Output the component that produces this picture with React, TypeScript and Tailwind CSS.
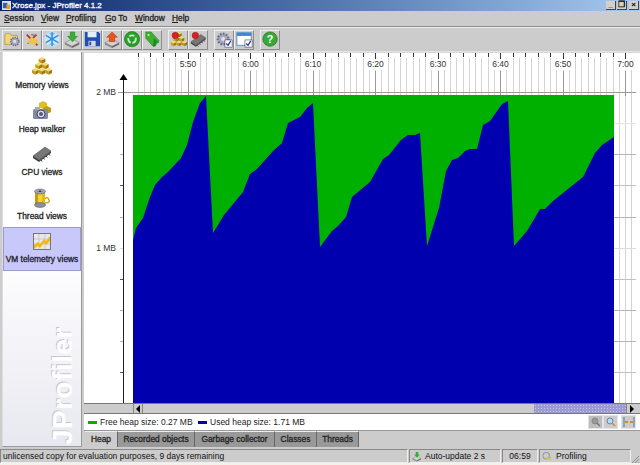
import React from "react";

const curve: [number, number][] = [
  [133, 240],[136, 228],[143, 218],[150, 197],[155, 185],[162, 177],[168, 172],[181, 158],[187, 145],[193, 122],[200, 103],[206, 96],
  [213, 233],[224, 215],[243, 192],[250, 174],[257, 169],[273, 151],[282, 143],[288, 123],[300, 117],[307, 108],[313, 103],
  [320, 247],[332, 231],[338, 226],[346, 217],[352, 197],[370, 182],[383, 159],[389, 155],[401, 140],[408, 135],[415, 135],[420, 133],
  [427, 246],[439, 208],[446, 171],[452, 160],[458, 158],[465, 151],[470, 149],[477, 149],[483, 125],[490, 121],[502, 104],[508, 101],
  [514, 246],[527, 231],[533, 221],[540, 209],[545, 209],[553, 201],[583, 177],[595, 153],[602, 145],[614, 137],
];
const usedPoints = [...curve.map((p) => p.join(",")), "614,403", "133,403"].join(" ");
const FONT = "font-['Liberation_Sans',Arial,sans-serif]";
const SVG_FONT = { fontFamily: "'Liberation Sans', Arial, sans-serif" };

const minor = Array.from({ length: 80 }, (_, i) => 138 + i * 6.25);
const labels = ["5:50", "6:00", "6:10", "6:20", "6:30", "6:40", "6:50", "7:00"];
const yTicks: [number, string][] = [
  [123, "#e4e4e4"], [154, "#b4b4b4"], [185, "#555555"], [217, "#b4b4b4"], [248, "#dcdcdc"],
  [279, "#555555"], [310, "#b4b4b4"], [341, "#b4b4b4"], [372, "#555555"],
];

function Chart() {
  return (
    <svg viewBox="84 52 556 351" className="block w-full h-[351px]" shapeRendering="crispEdges">
      <rect x="84" y="52" width="556" height="351" fill="#ffffff" />
      <line x1="84" x2="640" y1="52.5" y2="52.5" stroke="#d8d8d8" />
      {minor.map((x, i) => (
        <g key={x}>
          <line x1={x} x2={x} y1="58" y2="403" stroke="#d4d4d4" />
          {i % 2 === 0 && <line x1={x} x2={x} y1="53" y2={i % 10 === 8 ? 60 : 57} stroke="#333333" />}
        </g>
      ))}
      {labels.map((l, i) => {
        const x = 188 + i * 62.5;
        return (
          <g key={l}>
            <rect x={x - 9} y="59" width="18" height="11" fill="#ffffff" />
            <line x1={x} x2={x} y1="71" y2="96" stroke="#999999" />
            <text x={x} y="67" textAnchor="middle" fontSize="8.5" fill="#333" style={SVG_FONT} shapeRendering="auto">{l}</text>
          </g>
        );
      })}
      <line x1="118" x2="636" y1="92.5" y2="92.5" stroke="#9a9a9a" />
      {yTicks.map(([y, c]) => (
        <g key={y}>
          <line x1="133" x2="636" y1={y + 0.5} y2={y + 0.5} stroke={c === "#555555" ? "#c0c0c0" : c} />
          <line x1="120" x2="124" y1={y + 0.5} y2={y + 0.5} stroke={c} />
        </g>
      ))}
      <line x1="123.5" x2="123.5" y1="78" y2="403" stroke="#222222" />
      <polygon points="123.5,74 119.5,80 127.5,80" fill="#000000" shapeRendering="auto" />
      <rect x="133" y="95" width="481" height="308" fill="#00b000" />
      <polygon points={usedPoints} fill="#0000ae" shapeRendering="auto" />
      <text x="116" y="95" textAnchor="end" fontSize="8.5" fill="#333" style={SVG_FONT} shapeRendering="auto">2 MB</text>
      <text x="116" y="251" textAnchor="end" fontSize="8.5" fill="#333" style={SVG_FONT} shapeRendering="auto">1 MB</text>
    </svg>
  );
}

function CubeGroup() {
  const c = (x: number, y: number) => (
    <g key={`${x}-${y}`}>
      <polygon points={`${x},${y + 1.5} ${x + 3},${y} ${x + 6},${y + 1.5} ${x + 3},${y + 3}`} fill="#f4dc6a" />
      <polygon points={`${x},${y + 1.5} ${x + 3},${y + 3} ${x + 3},${y + 6} ${x},${y + 4.5}`} fill="#c99a18" />
      <polygon points={`${x + 6},${y + 1.5} ${x + 3},${y + 3} ${x + 3},${y + 6} ${x + 6},${y + 4.5}`} fill="#9a7510" />
    </g>
  );
  return <g>{[[6, 0], [3, 5], [9, 5], [0, 10], [6, 10], [12, 10]].map(([x, y]) => c(x, y))}</g>;
}

function Cubes({ size = 20 }: { size?: number }) {
  return (
    <svg width={size} height={size} viewBox="0 0 18 18">
      <CubeGroup />
    </svg>
  );
}

function ChipGroup() {
  return (
    <g>
      <polygon points="1,10 13,1 19,5 7,14" fill="#77777a" stroke="#444" strokeWidth="0.5" />
      <polygon points="1,10 7,14 7,16 1,12" fill="#3a3a3a" />
      <polygon points="7,14 19,5 19,7 7,16" fill="#4a4a4a" />
      {[0, 1, 2, 3].map((i) => (
        <line key={i} x1={9 + i * 2.6} y1={14 - i * 2} x2={10 + i * 2.6} y2={15.5 - i * 2} stroke="#333" />
      ))}
    </g>
  );
}

function Chip({ size = 20 }: { size?: number }) {
  return (
    <svg width={size} height={size * 0.8} viewBox="0 0 20 16">
      <ChipGroup />
    </svg>
  );
}

function Spool() {
  return (
    <svg width="18" height="20" viewBox="0 0 18 20">
      <path d="M9 15c5 0 8 0 7-3s-3-3-4-1" fill="none" stroke="#c69c10" strokeWidth="1.3" />
      <rect x="2" y="4" width="10" height="12" fill="#f5d430" />
      <rect x="2" y="4" width="3" height="12" fill="#c99c10" />
      <rect x="9" y="4" width="3" height="12" fill="#e4b818" />
      <ellipse cx="7" cy="3.5" rx="5.5" ry="2.5" fill="#9aa4b4" stroke="#555" strokeWidth="0.5" />
      <ellipse cx="7" cy="3.2" rx="1.6" ry="0.8" fill="#333" />
      <ellipse cx="7" cy="17" rx="5.5" ry="2.5" fill="#8a90a0" stroke="#555" strokeWidth="0.5" />
    </svg>
  );
}

function Telemetry() {
  return (
    <svg width="18" height="18" viewBox="0 0 18 18">
      <rect x="0.5" y="1.5" width="17" height="16" fill="#e8e8e8" stroke="#777" />
      <path d="M1 7h16M1 12h16M6 2v15M12 2v15" stroke="#bbb" strokeWidth="0.6" />
      <polygon points="1,13 5,10 7,12 11,7 13,9 17,4 17,9 13,13 11,11 7,16 5,14 1,17" fill="#f2b818" />
    </svg>
  );
}

function HeapWalker() {
  return (
    <svg width="20" height="20" viewBox="0 0 20 20">
      <polygon points="11,0 15,2 15,6 11,8 7,6 7,2" fill="#e2bc2a" />
      <polygon points="15,5 19,7 19,11 15,13 11,11 11,7" fill="#c79a14" />
      <rect x="1" y="8" width="15" height="10" rx="1.5" fill="#8589a8" />
      <rect x="3" y="6" width="5" height="3" fill="#a6a8bc" />
      <circle cx="9" cy="13" r="4" fill="#dcdce8" stroke="#44465c" />
      <circle cx="9" cy="13" r="2" fill="#55587a" />
    </svg>
  );
}

const Stop = () => <circle cx="6" cy="5" r="3.6" fill="#e02020" stroke="#901010" strokeWidth="0.6" />;
const Tray = () => (
  <g>
    <polygon points="1,13 9,9 17,13 9,17" fill="#d4d4d4" stroke="#777" strokeWidth="0.6" />
    <polygon points="1,13 9,17 9,19 1,15" fill="#888" />
    <polygon points="17,13 9,17 9,19 17,15" fill="#666" />
  </g>
);
const Check = ({ x = 10, y = 10 }: { x?: number; y?: number }) => (
  <g transform={`translate(${x} ${y})`}>
    <rect x="0" y="0" width="8" height="8" fill="#fff" stroke="#334" strokeWidth="0.6" />
    <path d="M1.5 4l2 2 3-5" fill="none" stroke="#1530a0" strokeWidth="1.3" />
  </g>
);
const Gear = () => (
  <g>
    <circle cx="8" cy="9" r="6" fill="#a8a8c4" stroke="#6a6a88" strokeWidth="2.4" strokeDasharray="2 1.4" />
    <circle cx="8" cy="9" r="2.2" fill="#e4e4ee" />
  </g>
);

const toolIcons: React.ReactNode[] = [
  <g key="1"><path d="M1 5l1-2h5l1 2h7v10H1z" fill="#f0d878" stroke="#a88a30" strokeWidth="0.7" /><g transform="translate(6 5) scale(.75)"><Gear /></g></g>,
  <g key="2"><path d="M3 4l12 12M14 4L4 14" stroke="#d02020" strokeWidth="1.8" /><path d="M3 13l5-6 8 3-3 5z" fill="#e8c840" /><path d="M8 4l5 1" stroke="#777" strokeWidth="1.6" /></g>,
  <g key="3"><circle cx="9" cy="9" r="8.5" fill="#cfe6fa" /><path d="M9 1v16M2 5l14 8M16 5L2 13" stroke="#2a8ee0" strokeWidth="1.6" /><path d="M6 2l3 3 3-3M6 16l3-3 3 3" stroke="#2a8ee0" fill="none" /></g>,
  <g key="4"><Tray /><polygon points="7,1 12,1 12,6 15,6 9.5,12 4,6 7,6" fill="#35b035" stroke="#1a7a1a" strokeWidth="0.5" /></g>,
  <g key="5"><path d="M1 1h15l2 2v14H1z" fill="#1f4fb0" /><rect x="4" y="1" width="10" height="6" fill="#e8eef8" /><rect x="5" y="11" width="8" height="6" fill="#d8d8e0" /><rect x="6" y="12" width="2" height="4" fill="#1f4fb0" /></g>,
  <g key="6"><Tray /><polygon points="9,1 15,7 12,7 12,12 6,12 6,7 3,7" fill="#e8541c" stroke="#a83008" strokeWidth="0.5" /></g>,
  <g key="7"><circle cx="9" cy="9" r="8.5" fill="#28a028" stroke="#156815" strokeWidth="0.6" /><circle cx="9" cy="9" r="4.2" fill="none" stroke="#d6f0d0" strokeWidth="2" strokeDasharray="6 2" /></g>,
  <g key="8"><polygon points="2,1 8,1 17,11 12,17 10,17 2,8" fill="#40b030" stroke="#1c7a1c" strokeWidth="0.6" /><circle cx="5" cy="4.5" r="1.2" fill="#d0f0c0" /><polygon points="11,8 17,13 13,13 13,17 10,17" fill="#1c8a2c" /></g>,
  <g key="9"><g transform="translate(1 1)"><CubeGroup /></g><Stop /></g>,
  <g key="10"><g transform="translate(0 3) scale(.92)"><ChipGroup /></g><Stop /></g>,
  <g key="11"><Gear /><Check /></g>,
  <g key="12"><rect x="1" y="2" width="16" height="14" fill="#ffffff" stroke="#5088c8" /><rect x="1" y="2" width="16" height="3.5" fill="#3a8ad8" /><Check /></g>,
  <g key="13"><circle cx="9" cy="9" r="8" fill="#38a838" stroke="#167016" strokeWidth="0.8" /><text x="9" y="13" textAnchor="middle" fontSize="12" fontWeight="700" fill="#fff" style={SVG_FONT}>?</text></g>,
];

function ToolButton({ icon }: { icon: React.ReactNode }) {
  return (
    <div className="w-5 h-[20px] flex items-center justify-center border border-t-[#efefef] border-l-[#efefef] border-r-[#8c8c8c] border-b-[#8c8c8c] bg-[#cccccc]">
      <svg width="17" height="17" viewBox="0 0 19 19">{icon}</svg>
    </div>
  );
}

const Sep = () => <div className="w-[6px]" />;
const HEAVY = "[-webkit-text-stroke:0.3px_#222222]";

function Menu({ first, rest, className }: { first: string; rest: string; className: string }) {
  return <span className={`${className} whitespace-nowrap`}><span className="underline">{first}</span>{rest}</span>;
}

function SideItem({ icon, label, selected }: { icon: React.ReactNode; label: string; selected?: boolean }) {
  return (
    <div className={`h-[43.75px] shrink-0 flex flex-col items-center justify-end pb-[5px] gap-[1px] ${selected ? "bg-[#c8c8fa] border border-[#9c9ccc]" : ""}`}>
      <div className="h-[24px] flex items-center justify-center">{icon}</div>
      <div className={`text-[8.4px] leading-[11px] text-[#222] whitespace-nowrap ${HEAVY}`}>{label}</div>
    </div>
  );
}

function Tab({ label, w, active }: { label: string; w: string; active?: boolean }) {
  return (
    <div className={`${w} h-[16px] flex items-center justify-center whitespace-nowrap text-[8.4px] text-[#222] border-r border-r-[#666] border-t border-t-[#eee] ${HEAVY} ${active ? "bg-[#cccccc]" : "bg-[#999999]"}`}>
      {label}
    </div>
  );
}

function Status({ w, children }: { w: string; children: React.ReactNode }) {
  return (
    <div className={`${w} h-[14px] flex items-center border-t border-l border-t-[#888] border-l-[#888] border-b border-r border-b-[#eee] border-r-[#eee] text-[8.5px] text-[#111] whitespace-nowrap`}>
      {children}
    </div>
  );
}

export default function App() {
  return (
    <div className={`${FONT} w-[640px] h-[465px] overflow-hidden bg-[#cccccc] flex flex-col`}>
      {/* title */}
      <div className="h-[11px] shrink-0 flex items-center bg-gradient-to-r from-[#0a246a] to-[#a6caf0] pl-[2px] pr-[1px]">
        <svg width="9" height="9" viewBox="0 0 10 10" className="mr-[1px]"><rect width="10" height="10" fill="#d8e4f0" /><rect x="1" y="2" width="5" height="6" fill="#3060c0" /><rect x="5" y="4" width="4" height="5" fill="#e8a020" /></svg>
        <span className="text-[8px] leading-[11px] text-white whitespace-nowrap [-webkit-text-stroke:0.3px_#ffffff]">Xrose.jpx - JProfiler 4.1.2</span>
        <div className="ml-auto flex gap-[1px]">
          {["_", "❐", "×"].map((s, i) => (
            <div key={s} className={`w-[10px] h-[9px] bg-[#d4d0c8] border-r border-b border-[#444] text-[8px] leading-[8px] text-black text-center font-bold ${i === 2 ? "ml-[1px]" : ""}`}>{s}</div>
          ))}
        </div>
      </div>
      {/* menu */}
      <div className={`h-[16px] shrink-0 relative flex items-center text-[8.4px] text-[#222] border-b border-b-[#8c8c8c] ${HEAVY}`}>
        <Menu first="S" rest="ession" className="ml-[4px] w-[37px]" />
        <Menu first="V" rest="iew" className="w-[25px]" />
        <Menu first="P" rest="rofiling" className="w-[39px]" />
        <Menu first="G" rest="o To" className="w-[30px]" />
        <Menu first="W" rest="indow" className="w-[37px]" />
        <Menu first="H" rest="elp" className="w-[24px]" />
      </div>
      {/* toolbar */}
      <div className="h-[25px] shrink-0 flex items-center pl-[2px] border-t border-t-[#eeeeee] border-b border-b-[#e4e4e4]">
        {toolIcons.slice(0, 8).map((ic, i) => <ToolButton key={i} icon={ic} />)}
        <Sep />
        {toolIcons.slice(8, 10).map((ic, i) => <ToolButton key={i} icon={ic} />)}
        <Sep />
        {toolIcons.slice(10, 12).map((ic, i) => <ToolButton key={i} icon={ic} />)}
        <Sep />
        <ToolButton icon={toolIcons[12]} />
      </div>
      {/* body */}
      <div className="flex flex-1 min-h-0">
        {/* sidebar */}
        <div className="w-[80px] ml-[2px] mr-[2px] h-[395px] shrink-0 flex flex-col bg-gradient-to-b from-[#ffffff] via-[#ffffff] to-[#e8e8f0] border-r border-r-[#999] border-b border-b-[#999] border-l border-l-[#ddd]">
          <SideItem icon={<Cubes />} label="Memory views" />
          <SideItem icon={<HeapWalker />} label="Heap walker" />
          <SideItem icon={<Chip />} label="CPU views" />
          <SideItem icon={<Spool />} label="Thread views" />
          <SideItem icon={<Telemetry />} label="VM telemetry views" selected />
          <div className="mt-auto self-end mr-[4px] mb-[1px] [writing-mode:vertical-rl] rotate-180 text-[28px] leading-[29px] font-bold text-white [text-shadow:1px_-1px_0_#c8c8d0] whitespace-nowrap tracking-[0.5px]">JProfiler</div>
        </div>
        {/* main */}
        <div className="flex-1 min-w-0 flex flex-col">
          <Chart />
          {/* scrollbar */}
          <div className="h-[11px] shrink-0 flex border-t border-t-[#777] border-b border-b-[#777] bg-[#cccccc]">
            <div className="w-[49px]" />
            <div className="w-[10px] bg-[#cccccc] border-x border-x-[#888] flex items-center justify-center">
              <div className="w-0 h-0 border-y-[4px] border-y-transparent border-r-[4px] border-r-black" />
            </div>
            <div className="flex-1" />
            <div className="w-[92px] bg-[#9c9cce] bg-[radial-gradient(#c4c4e6_0.6px,transparent_0.7px)] bg-[length:3px_3px]" />
            <div className="w-[10px] flex items-center justify-center border-l border-l-[#888]">
              <div className="w-0 h-0 border-y-[4px] border-y-transparent border-l-[4px] border-l-black" />
            </div>
            <div className="w-[4px]" />
          </div>
          {/* legend */}
          <div className="h-[17px] shrink-0 bg-white flex items-center pl-[4px] text-[8.5px] text-[#222] border-b border-b-[#999]">
            <div className="w-[9px] h-[3px] bg-[#00b000] mr-[3px]" />
            <span className="w-[98px] whitespace-nowrap">Free heap size: 0.27 MB</span>
            <div className="w-[9px] h-[3px] bg-[#0000ae] mr-[3px]" />
            <span className="whitespace-nowrap">Used heap size: 1.71 MB</span>
            <div className="ml-auto flex items-center pr-[4px]">
              <div className="w-[15px] h-[14px] bg-[#bdbdbd] border border-[#e4e4e4] flex items-center justify-center">
                <svg width="10" height="10" viewBox="0 0 10 10"><circle cx="4" cy="4" r="3" fill="#999" stroke="#888" /><path d="M6 6l3 3" stroke="#777" strokeWidth="1.5" /></svg>
              </div>
              <div className="w-[15px] h-[14px] bg-[#cccccc] border border-[#e4e4e4] flex items-center justify-center">
                <svg width="10" height="10" viewBox="0 0 10 10"><circle cx="4" cy="4" r="3" fill="#bcd8f0" stroke="#5a8ac0" /><path d="M6 6l3 3" stroke="#d09020" strokeWidth="1.5" /></svg>
              </div>
              <div className="w-[15px] h-[14px] ml-[3px] bg-[#cccccc] border border-[#e4e4e4] flex items-center justify-center">
                <svg width="12" height="10" viewBox="0 0 12 10"><path d="M1 0v10M11 0v10" stroke="#4a7ac0" /><path d="M2 5h3M7 5h3" stroke="#d09020" strokeWidth="2" /></svg>
              </div>
            </div>
          </div>
          {/* tabs */}
          <div className="flex h-[16px] shrink-0 pl-[1px]">
            <Tab label="Heap" w="w-[33px]" active />
            <Tab label="Recorded objects" w="w-[77px]" />
            <Tab label="Garbage collector" w="w-[80px]" />
            <Tab label="Classes" w="w-[42px]" />
            <Tab label="Threads" w="w-[42px]" />
          </div>
        </div>
      </div>
      {/* status */}
      <div className="h-[16px] shrink-0 flex items-start pt-[2px]">
        <Status w="w-[408px] pl-[2px]">unlicensed copy for evaluation purposes, 9 days remaining</Status>
        <Status w="w-[92px] ml-[1px] pl-[2px]">
          <svg width="10" height="11" viewBox="0 0 19 19" className="mr-[3px]"><Tray /><polygon points="7,1 12,1 12,6 15,6 9.5,12 4,6 7,6" fill="#35b035" /></svg>
          Auto-update 2 s
        </Status>
        <Status w="w-[36px] ml-[1px] justify-center">06:59</Status>
        <Status w="w-[92px] ml-[1px] pl-[2px]">
          <svg width="11" height="10" viewBox="0 0 19 19" className="mr-[3px]"><circle cx="7" cy="9" r="6" fill="#ccc" stroke="#999" strokeWidth="2" /><path d="M5 15l4-3 3 2 5-3-2 6z" fill="#e0c040" /></svg>
          Profiling
        </Status>
        <div className="w-[8px] h-[14px] flex items-end">
          <svg width="8" height="8" viewBox="0 0 8 8"><path d="M8 1L1 8M8 4L4 8M8 7L7 8" stroke="#888" /></svg>
        </div>
      </div>
      <div className="h-[2px] shrink-0 bg-[#f4f1e8]" />
    </div>
  );
}
